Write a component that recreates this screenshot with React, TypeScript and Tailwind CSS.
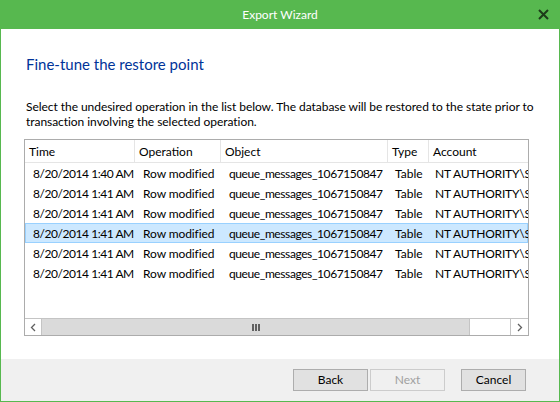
import React from 'react';

const rows = [
  '8/20/2014 1:40 AM',
  '8/20/2014 1:41 AM',
  '8/20/2014 1:41 AM',
  '8/20/2014 1:41 AM',
  '8/20/2014 1:41 AM',
  '8/20/2014 1:41 AM',
];

const cols = 'grid grid-cols-[110px_86px_167px_41px_140px]';

export default function App() {
  return (
    <div
      className="w-[560px] h-[402px] flex flex-col bg-white border-x border-b border-[#57b84f] text-[12px] text-black overflow-hidden"
      style={{ fontFamily: 'Lato, "Noto Sans", sans-serif' }}
    >
      {/* title bar */}
      <div className="h-[29px] shrink-0 bg-[#57b84f] -mx-px flex items-center justify-center relative">
        <span className="text-white text-[12px]">Export Wizard</span>
        <svg className="absolute right-[11px] top-[9px]" width="11" height="11" viewBox="0 0 11 11">
          <path d="M1 1L10 10M10 1L1 10" stroke="#1d3b19" strokeWidth="2" />
        </svg>
      </div>

      {/* body */}
      <div className="flex-1 flex flex-col px-[23px] pt-[25px]">
        <h1 className="text-[15px] leading-[20px] text-[#003399] pl-[2px]">Fine-tune the restore point</h1>
        <p className="mt-[25px] leading-[15px] pl-[2px] whitespace-nowrap tracking-[-0.05px]">
          Select the undesired operation in the list below. The database will be restored to the state prior to
          <br />
          transaction involving the selected operation.
        </p>

        <div className="mt-[10px] w-[505px] h-[197px] border border-[#acacac] flex flex-col overflow-hidden">
          <div className={`${cols} h-[23px] shrink-0 border-b border-[#e5e5e5]`}>
            {['Time', 'Operation', 'Object', 'Type', 'Account'].map((h) => (
              <div key={h} className="pl-[4px] pt-[1px] flex items-center border-r border-[#e5e5e5] whitespace-nowrap">
                {h}
              </div>
            ))}
          </div>
          {rows.map((t, i) => (
            <div
              key={i}
              className={`${cols} h-[20px] shrink-0 items-center pt-[1px] whitespace-nowrap ${
                i === 3 ? 'bg-[#cce8ff] border border-[#99d1ff]' : 'border border-transparent'
              }`}
            >
              <div className="pl-[7px] tracking-[-0.45px]">{t}</div>
              <div className="pl-[7px] tracking-[-0.1px]">Row modified</div>
              <div className="pl-[7px] tracking-[-0.4px]">queue_messages_1067150847</div>
              <div className="pl-[6px]">Table</div>
              <div className="pl-[5px] overflow-hidden tracking-[-0.2px]">NT AUTHORITY\SYSTEM</div>
            </div>
          ))}
          <div className="flex-1" />
          {/* horizontal scrollbar */}
          <div className="h-[17px] shrink-0 flex border-t border-[#c4c4c4]">
            <div className="w-[17px] flex items-center justify-center border-r border-[#c4c4c4]">
              <svg width="6" height="9" viewBox="0 0 6 9">
                <path d="M5 1L1.5 4.5L5 8" stroke="#606060" strokeWidth="1.3" fill="none" />
              </svg>
            </div>
            <div className="w-[428px] bg-[#dadada] border-r border-[#c4c4c4] flex items-center justify-center gap-[1px]">
              <span className="w-[2px] h-[7px] bg-[#606060]" />
              <span className="w-[2px] h-[7px] bg-[#606060]" />
              <span className="w-[2px] h-[7px] bg-[#606060]" />
            </div>
            <div className="flex-1 border-r border-[#c4c4c4]" />
            <div className="w-[17px] flex items-center justify-center">
              <svg width="6" height="9" viewBox="0 0 6 9">
                <path d="M1 1L4.5 4.5L1 8" stroke="#606060" strokeWidth="1.3" fill="none" />
              </svg>
            </div>
          </div>
        </div>
      </div>

      {/* footer */}
      <div className="h-[42px] shrink-0 bg-[#f0f0f0] flex items-start justify-end pt-[10px] pr-[33px]">
        <button className="w-[75px] h-[22px] bg-[#e1e1e1] border border-[#adadad] text-[12px]">Back</button>
        <button className="ml-[2px] w-[75px] h-[22px] bg-[#f0f0f0] border border-[#cccccc] text-[#a0a0a0] text-[12px]" disabled>
          Next
        </button>
        <button className="ml-[16px] w-[65px] h-[22px] bg-[#e1e1e1] border border-[#adadad] text-[12px]">Cancel</button>
      </div>
    </div>
  );
}
